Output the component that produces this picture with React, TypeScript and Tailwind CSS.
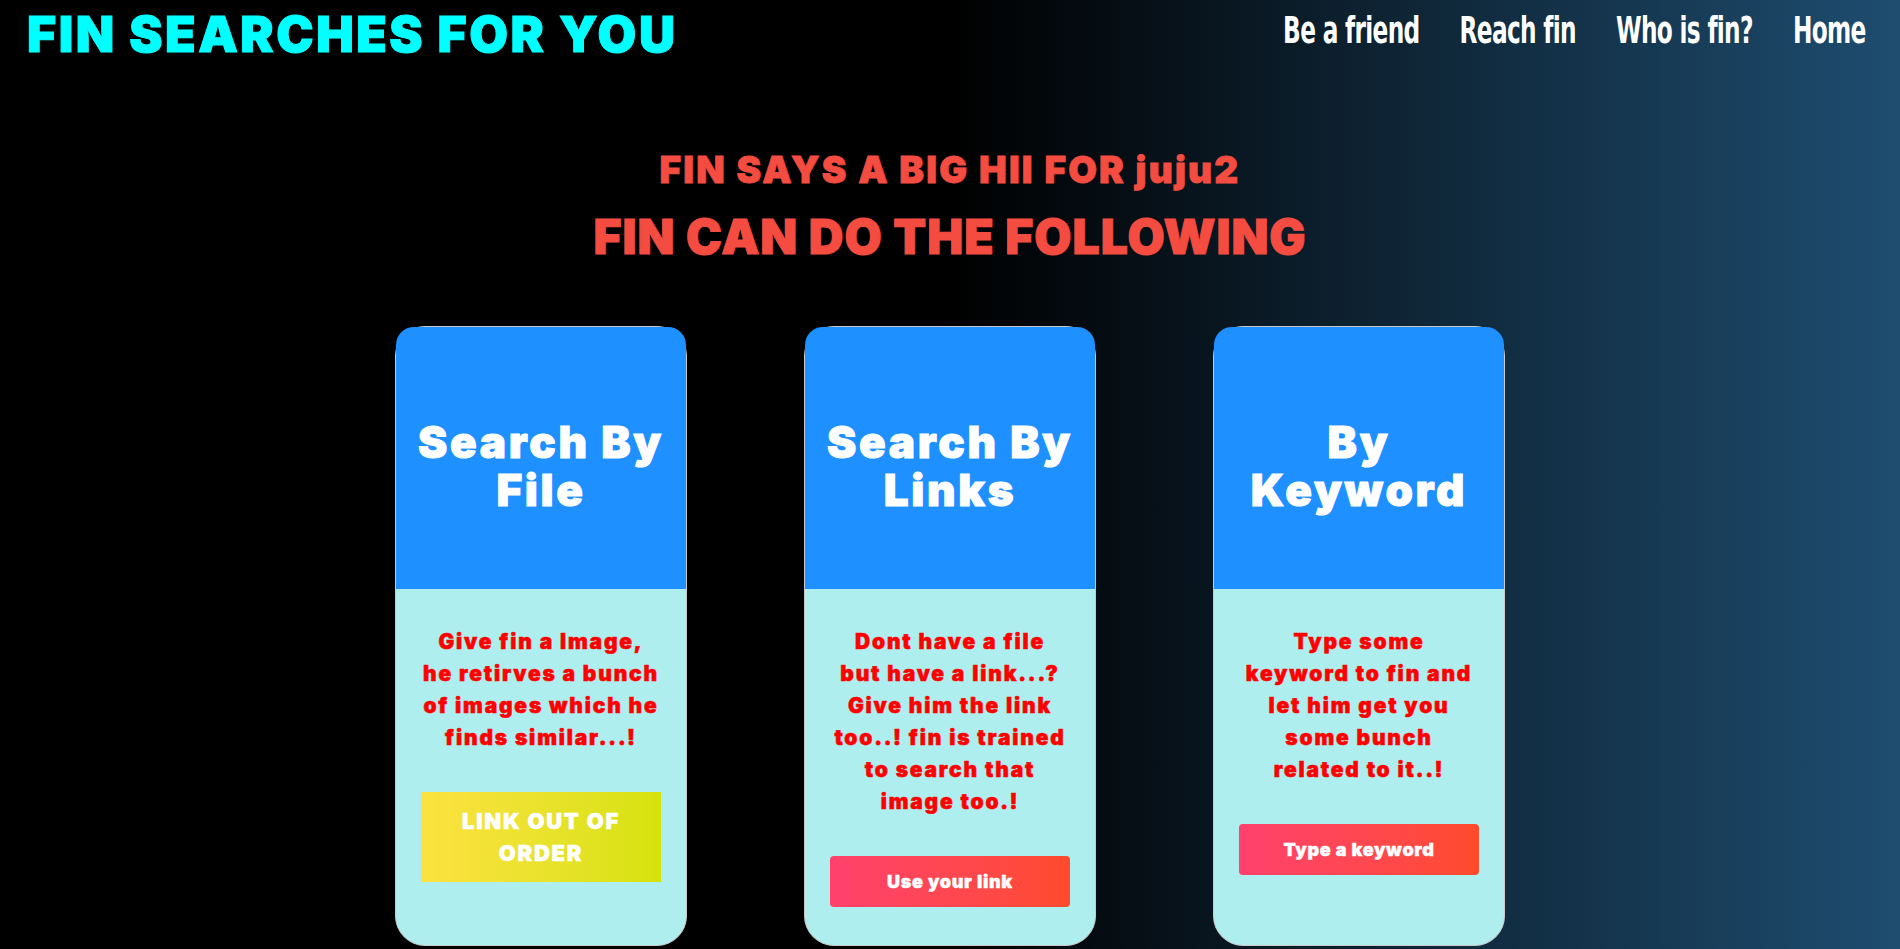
const cards = [
  {
    title: ["Search By", "File"],
    text: ["Give fin a Image,", "he retirves a bunch", "of images which he", "finds similar...!"],
    button: "LINK OUT OF ORDER",
    kind: "disabled",
  },
  {
    title: ["Search By", "Links"],
    text: [
      "Dont have a file",
      "but have a link...?",
      "Give him the link",
      "too..! fin is trained",
      "to search that",
      "image too.!",
    ],
    button: "Use your link",
    kind: "action",
  },
  {
    title: ["By", "Keyword"],
    text: ["Type some", "keyword to fin and", "let him get you", "some bunch", "related to it..!"],
    button: "Type a keyword",
    kind: "action",
  },
];

function Lines({ lines }: { lines: string[] }) {
  return (
    <>
      {lines.map((l, i) => (
        <span key={i} className="block">
          {l}
        </span>
      ))}
    </>
  );
}

function Card({ card }: { card: (typeof cards)[number] }) {
  return (
    <div className="flex h-[620px] w-[292px] flex-col rounded-[30px] border border-[#c9c9c9] bg-[#afeeee]">
      {/* blue heading block */}
      <div className="flex h-[262px] items-center justify-center rounded-t-[18px] bg-[#1e90ff] pt-4 text-center text-[44px] font-black leading-[48px] tracking-[2.7px] text-white [-webkit-text-stroke:1px_currentcolor]">
        <h3>
          <Lines lines={card.title} />
        </h3>
      </div>
      <div className="flex flex-col items-center pt-[37px] text-center">
        <p className="text-[21px] font-black leading-[32px] tracking-[1.8px] text-[#ff0000] [-webkit-text-stroke:0.5px_currentcolor]">
          <Lines lines={card.text} />
        </p>
        {card.kind === "disabled" ? (
          <button
            type="button"
            className="mt-[38px] h-[90px] w-[240px] bg-gradient-to-r from-[#fde23f] to-[#d6e209] px-6 text-[22px] font-black uppercase leading-[32px] tracking-[1.7px] text-white [-webkit-text-stroke:0.5px_currentcolor]"
          >
            {card.button}
          </button>
        ) : (
          <button
            type="button"
            className="mt-[38px] h-[51px] w-[240px] rounded-[4px] bg-gradient-to-r from-[#ff416c] to-[#ff4b2b] text-[18px] font-black tracking-[0.7px] text-white [-webkit-text-stroke:0.4px_currentcolor]"
          >
            {card.button}
          </button>
        )}
      </div>
    </div>
  );
}

export default function App() {
  return (
    <div className="h-screen overflow-hidden bg-[linear-gradient(to_right,#000_50%,#1e4d70)] font-[Inter,'Noto_Sans',sans-serif]">
      {/* Top bar */}
      <header className="flex items-start justify-between pl-[27px] pr-[34px] pt-[4px]">
        <h1 className="text-[50px] font-black leading-[60px] tracking-[2.5px] text-[#00ffff] [-webkit-text-stroke:1px_currentcolor]">
          FIN SEARCHES FOR YOU
        </h1>
        <nav className="mt-[6px] flex origin-right scale-x-[0.68] gap-[59px] font-['DejaVu_Sans_Condensed','Liberation_Sans_Narrow',sans-serif] text-[38px] font-bold leading-[40px] tracking-[-1px] text-white">
          <a href="#">Be a friend</a>
          <a href="#">Reach fin</a>
          <a href="#">Who is fin?</a>
          <a href="#">Home</a>
        </nav>
      </header>

      <main className="flex flex-col items-center">
        <h2 className="mt-[84px] text-[37px] font-black leading-[44px] tracking-[2.2px] text-[#f44c40] [-webkit-text-stroke:0.8px_currentcolor]">
          FIN SAYS A BIG HII FOR juju2
        </h2>
        <h2 className="mt-[16px] text-[48px] font-black leading-[58px] tracking-[1px] text-[#f44c40] [-webkit-text-stroke:1px_currentcolor]">
          FIN CAN DO THE FOLLOWING
        </h2>

        <div className="mt-[60px] flex gap-[117px]">
          {cards.map((c) => (
            <Card key={c.button} card={c} />
          ))}
        </div>
      </main>
    </div>
  );
}
